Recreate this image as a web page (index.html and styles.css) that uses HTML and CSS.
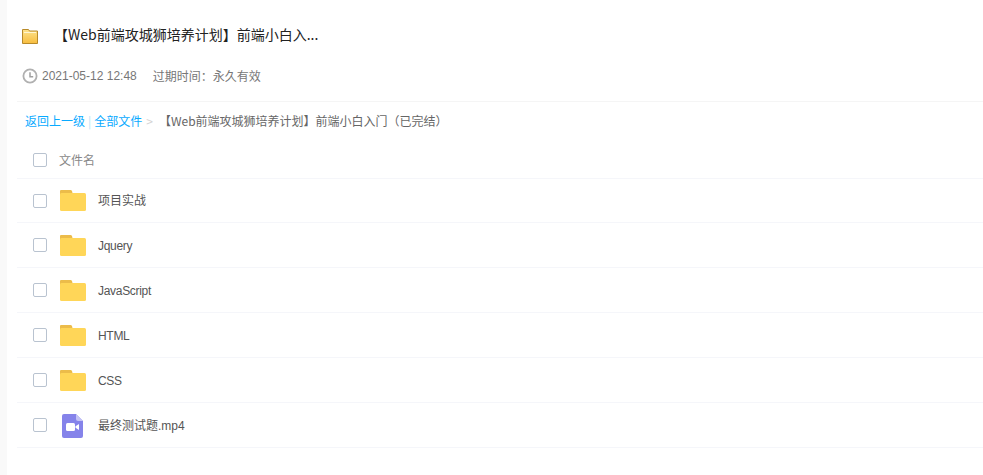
FILE: index.html
```html
<!DOCTYPE html>
<html lang="en">
<head>
  <meta charset="UTF-8" />
  <title>分享文件</title>
  <link rel="stylesheet" href="styles.css">
</head>
<body>
  <div class="page">
    <div class="share-head">
      <div class="share-title">
        <svg class="title-icon" width="16" height="15" viewBox="0 0 16 15">
          <defs>
            <linearGradient id="titleFolder" x1="0" y1="0" x2="0" y2="1">
              <stop offset="0" stop-color="#fde38e"/>
              <stop offset="1" stop-color="#f7bd3e"/>
            </linearGradient>
          </defs>
          <path d="M0.5 14.500V0.500H6.500L7.500 2H15.500V14.500Z" fill="url(#titleFolder)" stroke="#b88a2a"/>
          <path d="M2 3.500H14" stroke="#fff6d2"/>
        </svg>
        <span class="title-text">【Web前端攻城狮培养计划】前端小白入...</span>
      </div>
      <div class="share-meta">
        <svg width="16" height="16" viewBox="0 0 16 16">
          <circle cx="8" cy="8" r="6.600" fill="none" stroke="#b0b0b0" stroke-width="1.800"/>
          <path d="M8 4.200V8.800H11.200" fill="none" stroke="#a0a0a0" stroke-width="1.500"/>
        </svg>
        <span class="meta-date">2021-05-12 12:48</span>
        <span>过期时间：永久有效</span>
      </div>
    </div>

    <div class="crumbs">
      <a href="#">返回上一级</a><span class="crumb-bar">|</span><a href="#">全部文件</a><span class="crumb-sep">&gt;</span><span class="crumb-now">【Web前端攻城狮培养计划】前端小白入门（已完结）</span>
    </div>

    <div class="file-list">
      <div class="file-row file-header">
        <span class="check"></span>
        <span class="header-name">文件名</span>
      </div>
      <div class="file-row file-first">
        <span class="check"></span>
        <svg class="file-icon" width="26" height="21" viewBox="0 0 26 21"><path d="M1 0H10.500Q11.500 0 12 1L12.500 3V8H0V1Q0 0 1 0Z" fill="#ecbc4a"/><rect y="3" width="26" height="18" rx="1.500" fill="#ffd658"/></svg>
        <span class="file-name">项目实战</span>
      </div>
      <div class="file-row">
        <span class="check"></span>
        <svg class="file-icon" width="26" height="21" viewBox="0 0 26 21"><path d="M1 0H10.500Q11.500 0 12 1L12.500 3V8H0V1Q0 0 1 0Z" fill="#ecbc4a"/><rect y="3" width="26" height="18" rx="1.500" fill="#ffd658"/></svg>
        <span class="file-name latin">Jquery</span>
      </div>
      <div class="file-row">
        <span class="check"></span>
        <svg class="file-icon" width="26" height="21" viewBox="0 0 26 21"><path d="M1 0H10.500Q11.500 0 12 1L12.500 3V8H0V1Q0 0 1 0Z" fill="#ecbc4a"/><rect y="3" width="26" height="18" rx="1.500" fill="#ffd658"/></svg>
        <span class="file-name latin">JavaScript</span>
      </div>
      <div class="file-row">
        <span class="check"></span>
        <svg class="file-icon" width="26" height="21" viewBox="0 0 26 21"><path d="M1 0H10.500Q11.500 0 12 1L12.500 3V8H0V1Q0 0 1 0Z" fill="#ecbc4a"/><rect y="3" width="26" height="18" rx="1.500" fill="#ffd658"/></svg>
        <span class="file-name latin">HTML</span>
      </div>
      <div class="file-row">
        <span class="check"></span>
        <svg class="file-icon" width="26" height="21" viewBox="0 0 26 21"><path d="M1 0H10.500Q11.500 0 12 1L12.500 3V8H0V1Q0 0 1 0Z" fill="#ecbc4a"/><rect y="3" width="26" height="18" rx="1.500" fill="#ffd658"/></svg>
        <span class="file-name latin">CSS</span>
      </div>
      <div class="file-row">
        <span class="check"></span>
        <svg class="file-icon video-icon" width="21" height="24" viewBox="0 0 21 24"><path d="M2 0H14L21 7V22Q21 24 19 24H2Q0 24 0 22V2Q0 0 2 0Z" fill="#8583ea"/><path d="M14 0L21 7H16Q14 7 14 5Z" fill="#c4c3f5"/><rect x="4" y="9" width="9" height="8" rx="1.500" fill="#fff"/><path d="M13.500 12.300L17 10V16L13.500 13.700Z" fill="#fff"/></svg>
        <span class="file-name video-name">最终测试题.mp4</span>
      </div>
    </div>
  </div>
</body>
</html>
```

FILE: styles.css
```css
* { box-sizing: border-box; }
html, body { height: 100%; }
body {
  margin: 0;
  overflow: hidden;
  background: #f9f9f9;
  color: #666;
  font-family: "Noto Sans CJK SC", "Liberation Sans", sans-serif;
  font-size: 12px;
  line-height: 16px;
}
.page {
  height: 100%;
  margin-left: 7px;
  padding-left: 10px;
  background: #fff;
}

.share-head {
  height: 102px;
  padding: 26px 0 0 5px;
  border-bottom: 1px solid #f5f5f5;
}
.share-title {
  display: flex;
  align-items: center;
  height: 20px;
  font-size: 14px;
  color: #222;
}
.title-icon { margin-right: 16px; }
.title-text { margin-top: -5px; }
.share-meta {
  display: flex;
  align-items: center;
  margin-top: 22px;
  color: #777;
}
.meta-date {
  margin: 0 16px 0 4px;
  font-family: "Liberation Sans", sans-serif;
}

.crumbs {
  display: flex;
  align-items: center;
  height: 38px;
  padding-left: 8px;
  white-space: nowrap;
}
.crumbs a { color: #09aaff; text-decoration: none; }
.crumb-bar { margin: 0 3px; color: #b9dff5; }
.crumb-sep { margin: 0 6px 0 4px; color: #d4d4d4; }
.crumb-now { color: #666; }

.file-row {
  display: flex;
  align-items: center;
  height: 45px;
  border-bottom: 1px solid #f5f6fa;
}
.file-header { height: 39px; }
.file-first { height: 44px; }
.check {
  width: 14px;
  height: 14px;
  margin-left: 16px;
  flex: none;
  background: #fff;
  border: 1px solid #b9c3d0;
  border-radius: 2px;
}
.file-header .check { margin-top: 2px; }
.header-name { margin: 2px 0 0 12px; color: #888; }
.file-icon { margin-left: 13px; flex: none; }
.video-icon { margin: 2px 2px 0 15px; }
.file-name {
  margin-left: 12px;
  color: #555;
  font-family: "Liberation Sans", "Noto Sans CJK SC", sans-serif;
}
.latin { margin-top: 2px; letter-spacing: -0.3px; }
.video-name { margin: 2px 0 0 13px; }
```
